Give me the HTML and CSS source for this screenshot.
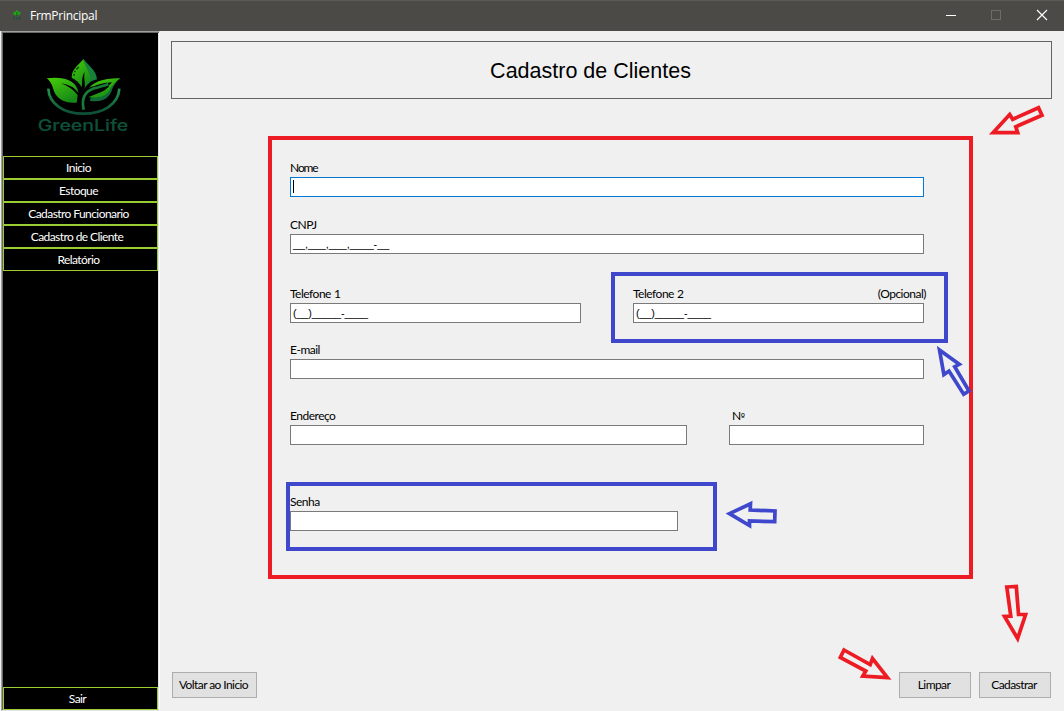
FILE: index.html
```html
<!DOCTYPE html>
<html lang="pt-BR">
<head>
<meta charset="utf-8">
<title>FrmPrincipal</title>
<link rel="stylesheet" href="styles.css">
</head>
<body>
<div class="window">
  <header class="titlebar">
    <svg class="app-icon" viewBox="0 0 10 10"><path d="M5 0L7 2L9 2.500L7.500 5L5 5.500L2 5L1 2.500L3 2Z" fill="#22a312"/><path d="M5 2V6" stroke="#0b5a22"/><path d="M1 6.500Q5 9 9 6.500M1 9H9" fill="none" stroke="#17503a" stroke-dasharray="2 1"/></svg>
    <span class="app-title">FrmPrincipal</span>
    <svg class="controls" viewBox="0 0 140 30"><path d="M22 14.500H32" stroke="#fff"/><rect x="67.500" y="9.500" width="9" height="9" fill="none" stroke="#6d6c69"/><path d="M113 9L123 19M123 9L113 19" stroke="#fff" stroke-width="1.200"/></svg>
  </header>
  <div class="body">
    <nav class="sidebar">
      <svg class="logo" viewBox="0 0 285 243">
        <defs>
          <linearGradient id="leaf" x1="0" y1="0" x2="0.600" y2="1"><stop offset="0" stop-color="#48cf08"/><stop offset="1" stop-color="#168a17"/></linearGradient>
          <linearGradient id="bowl" x1="0" y1="0" x2="0" y2="1"><stop offset="0" stop-color="#27914a"/><stop offset="1" stop-color="#0c5037"/></linearGradient>
        </defs>
        <path d="M145 9C159 28 185 43 186 70L171 75C164 79 158 85 153 91C158 65 144 51 145 9Z" fill="#16803c"/>
        <path d="M145 9C131 27 110 38 110 65C123 71 134 82 140 94C143 78 139 63 149 47C145 70 152 80 149 98C156 83 162 78 168 71C163 43 149 33 145 9Z" fill="url(#leaf)"/>
        <path d="M132 33Q117 43 117 60" fill="none" stroke="#063b0a" stroke-width="4" stroke-dasharray="11 5 5 5"/>
        <path d="M35 67C80 62 123 68 131 111Q113 87 78 82Q107 92 128 117L125 140C83 143 63 124 56 103C51 84 46 76 35 67Z" fill="url(#leaf)"/>
        <path d="M256 67C213 65 168 77 157 105C166 92 195 81 231 79Q211 105 160 124Q207 132 226 109Q239 78 256 67Z" fill="url(#leaf)"/>
        <path d="M256 67Q238 80 232 98C224 128 200 140 164 134L168 124Q205 129 221 107Q231 86 256 67Z" fill="#126c38"/>
        <path d="M169 116Q198 98 221 92Q204 111 169 116Z" fill="#000"/>
        <path d="M146 161C139 125 151 106 174 99Q202 94 218 86" fill="none" stroke="#000" stroke-width="15"/>
        <path d="M146 161C139 128 147 108 174 98Q203 91 220 84" fill="none" stroke="#167d36" stroke-width="8"/>
        <path d="M40 98C42 145 88 173 145 173C205 173 250 145 253 98" fill="none" stroke="url(#bowl)" stroke-width="8"/>
        <text x="8" y="226" class="logo-text" textLength="272" lengthAdjust="spacingAndGlyphs">GreenLife</text>
      </svg>
      <div class="menu">
        <button class="menu-item">Inicio</button>
        <button class="menu-item">Estoque</button>
        <button class="menu-item">Cadastro Funcionario</button>
        <button class="menu-item nudge">Cadastro de Cliente</button>
        <button class="menu-item">Relatório</button>
      </div>
      <button class="menu-item exit">Sair</button>
    </nav>
    <main class="content">
      <h1 class="heading">Cadastro de Clientes</h1>
      <form class="form">
        <div class="field name"><label>Nome</label><div class="input focused"><i class="caret"></i></div></div>
        <div class="field cnpj"><label>CNPJ</label><div class="input">__,___,___,____-__</div></div>
        <div class="row phones">
          <div class="field"><label>Telefone 1</label><div class="input phone">(__)_____-____</div></div>
          <div class="field"><div class="label-row"><label>Telefone 2</label><label class="optional">(Opcional)</label></div><div class="input phone">(__)_____-____</div></div>
        </div>
        <div class="field email"><label>E-mail</label><div class="input"></div></div>
        <div class="row address">
          <div class="field"><label>Endereço</label><div class="input"></div></div>
          <div class="field number"><label>N<span class="ordinal">º</span></label><div class="input"></div></div>
        </div>
        <div class="field password"><label>Senha</label><div class="input"></div></div>
      </form>
      <footer class="actions">
        <button class="btn back">Voltar ao Inicio</button>
        <button class="btn">Limpar</button>
        <button class="btn">Cadastrar</button>
      </footer>
    </main>
  </div>
  <svg class="annotations" viewBox="0 0 1064 711">
    <g class="blue">
      <rect x="613" y="274" width="333" height="67"/>
      <rect x="288" y="484" width="427" height="65"/>
      <path d="M939.500 350L959.300 364.300L954.700 366.700L969 391L963.700 394.300L949 371L943.900 374.500Z"/>
      <path d="M729.500 513.700L750.500 503.800L750.200 510L775 511L774.700 521.700L749.500 521L749.500 525.500Z"/>
    </g>
    <g class="red">
      <path d="M993 132.700L1009.700 114.500L1012.700 119.300L1038.500 107.700L1042 115.300L1015.700 126.700L1017.700 132.700Z"/>
      <path d="M1006.800 587L1016.300 586.500L1018.500 614.500L1025.600 614.500L1017.600 638.500L1004.500 616.500L1010.800 616.200Z"/>
      <path d="M844 650L870.200 664.500L872.500 658.500L887.500 677.700L862.800 676.200L865.800 671L840.300 657.500Z"/>
    </g>
  </svg>
</div>
</body>
</html>
```
FILE: styles.css
```css
* { box-sizing: border-box; }
body { margin: 0; font-family: Lato, "Liberation Sans", sans-serif; font-size: 12px; letter-spacing: -0.580px; color: #000; }
button { font: inherit; letter-spacing: inherit; padding: 0; margin: 0; border-radius: 0; }
.window { position: relative; width: 1064px; height: 711px; display: flex; flex-direction: column; background: #f0f0f0; overflow: hidden; }
.titlebar { height: 31px; flex: none; display: flex; align-items: center; background: #4b4a47; border-top: 1px solid #5c5b59; padding-left: 12px; color: #fff; }
.app-icon { width: 10px; height: 10px; margin: -2px 8px 0 0; }
.app-title { font: 12px/16px "Open Sans", sans-serif; letter-spacing: -0.280px; }
.controls { width: 140px; height: 30px; margin-left: auto; }
.body { flex: 1; display: flex; min-height: 0; }
.sidebar { width: 159px; margin-left: 1px; border: 1px solid #a0a0a0; border-right-color: #fff; border-bottom-color: #e3e3e3; background: #000; box-shadow: inset 1px 1px #696969, inset -1px 0 #e3e3e3; display: flex; flex-direction: column; padding: 24px 1px 0 1px; }
.logo { width: 95px; height: 81px; margin-left: 32px; flex: none; }
.logo-text { font: 500 48px Inter, sans-serif; letter-spacing: 0; fill: #0e5039; stroke: #0e5039; stroke-width: 0.500px; }
.menu { margin-top: 19px; display: flex; flex-direction: column; }
.menu-item { height: 23px; flex: none; border: 1px solid #9acd32; background: #000; color: #fff; text-align: center; padding-right: 4px; }
.nudge { padding-right: 7px; }
.exit { margin-top: auto; padding-right: 6px; }
.content { flex: 1; padding: 10px 12px 13px 11px; display: flex; flex-direction: column; }
.heading { margin: 0; height: 58px; flex: none; border: 1px solid #646464; display: flex; align-items: center; justify-content: center; padding: 2px 42px 0 0; font: 21.5px "Liberation Sans", sans-serif; letter-spacing: 0; }
.form { width: 705px; height: 443px; flex: none; margin: 37px 0 0 97px; border: 4px solid #ed1c24; padding: 20px 45px 0 18px; }
.field { display: flex; flex-direction: column; }
.field label { height: 17px; line-height: 16px; white-space: pre; letter-spacing: -0.500px; }
.name label { letter-spacing: -1.100px; }
.label-row { display: flex; justify-content: space-between; }
.field .optional { margin-right: -2px; }
.phones label { letter-spacing: -0.500px; word-spacing: 0.500px; }
.ordinal { font: 9px "DejaVu Sans", sans-serif; }
.input { height: 20px; border: 1px solid #7a7a7a; background: #fff; padding-left: 2px; font: 10.8px/19px "Liberation Sans", sans-serif; letter-spacing: -0.030px; }
.phone { letter-spacing: -0.140px; }
.focused { border-color: #0078d7; }
.caret { display: block; width: 1px; height: 13px; margin-top: 2px; background: #000; }
.cnpj { margin-top: 20px; }
.row { display: grid; }
.phones { margin-top: 32px; grid-template-columns: 291px 291px; column-gap: 52px; }
.email { margin-top: 19px; }
.address { margin-top: 29px; grid-template-columns: 397px 195px; column-gap: 42px; }
.number label { padding-left: 3px; }
.password { margin-top: 49px; width: 388px; }
.actions { margin-top: auto; display: flex; gap: 8px; padding: 0 1px; }
.btn { width: 72px; height: 26px; border: 1px solid #adadad; background: #e1e1e1; color: #000; padding: 0 2px 1px 0; }
.back { width: 85px; margin-right: auto; }
.annotations { position: absolute; inset: 0; width: 1064px; height: 711px; pointer-events: none; fill: none; }
.blue { stroke: #3f48cc; }
.red { stroke: #ed1c24; }
.annotations path { stroke-width: 3.700px; }
.annotations rect { stroke-width: 4px; }
```
